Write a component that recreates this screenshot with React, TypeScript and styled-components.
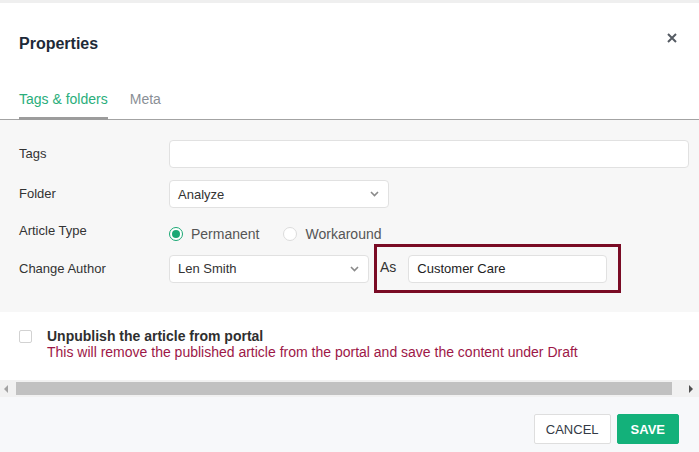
import styled, { createGlobalStyle } from 'styled-components';

const GlobalStyle = createGlobalStyle`
  * { box-sizing: border-box; }
  body {
    margin: 0;
    background: #ffffff;
    font-family: "Liberation Sans", Arial, sans-serif;
  }
`;

const Dialog = styled.div`
  width: 699px;
  height: 452px;
  background: #ffffff;
  border-top: 3px solid #efefef;
  display: flex;
  flex-direction: column;
  overflow: hidden;
`;

const Header = styled.div`
  display: flex;
  justify-content: space-between;
  align-items: center;
  padding: 32px 22px 0 19px;
  height: 50px;
`;

const Title = styled.h2`
  margin: 0;
  font-size: 16px;
  line-height: 18px;
  font-weight: 700;
  color: #1d2a38;
`;

const CloseBtn = styled.button`
  border: 0;
  background: none;
  padding: 0;
  margin-top: -12px;
  width: 10px;
  height: 10px;
  display: flex;
  cursor: pointer;
`;

const TabBar = styled.div`
  display: flex;
  gap: 22px;
  margin-top: 38px;
  padding: 0 19px;
  border-bottom: 1px solid #a3a3a3;
`;

const Tab = styled.div<{ $active?: boolean }>`
  font-size: 14px;
  line-height: 16px;
  padding-bottom: 10px;
  margin-bottom: -1px;
  color: ${(p) => (p.$active ? '#2aae7b' : '#8a8f96')};
  border-bottom: 3px solid ${(p) => (p.$active ? '#9c9c9c' : 'transparent')};
`;

const FormArea = styled.div`
  background: #f7f7f7;
  padding: 20px 10px 19px 19px;
  display: flex;
  flex-direction: column;
`;

const Row = styled.div<{ $gap?: number; $top?: boolean; $height?: number }>`
  display: flex;
  align-items: ${(p) => (p.$top ? 'flex-start' : 'center')};
  margin-top: ${(p) => p.$gap ?? 0}px;
  ${(p) => (p.$height ? `height: ${p.$height}px;` : '')}
`;

const Label = styled.div<{ $pad?: number }>`
  width: 150px;
  flex-shrink: 0;
  font-size: 13px;
  line-height: 16px;
  color: #333333;
  padding-top: ${(p) => p.$pad ?? 0}px;
`;

const TextInput = styled.div<{ $width?: number }>`
  height: 28px;
  ${(p) => (p.$width ? `width: ${p.$width}px;` : 'flex: 1;')}
  background: #ffffff;
  border: 1px solid #e1e1e1;
  border-radius: 4px;
  padding: 0 8px;
  display: flex;
  align-items: center;
  font-size: 13px;
  color: #222222;
`;

const Select = styled.div<{ $width: number }>`
  height: 28px;
  width: ${(p) => p.$width}px;
  background: #ffffff;
  border: 1px solid #e1e1e1;
  border-radius: 4px;
  padding: 0 9px 0 8px;
  display: flex;
  align-items: center;
  justify-content: space-between;
  font-size: 13px;
  color: #333333;
`;

const RadioGroup = styled.div`
  display: flex;
  align-items: center;
  padding-top: 6px;
`;

const RadioOption = styled.label`
  display: flex;
  align-items: center;
  gap: 8px;
  font-size: 14px;
  line-height: 16px;
  color: #555555;
  margin-right: 24px;
`;

const RadioDot = styled.span<{ $checked?: boolean }>`
  width: 14px;
  height: 14px;
  border-radius: 50%;
  background: #ffffff;
  border: 1px solid ${(p) => (p.$checked ? '#1aa874' : '#dcdcdc')};
  display: flex;
  align-items: center;
  justify-content: center;
  &::after {
    content: '';
    width: 8px;
    height: 8px;
    border-radius: 50%;
    background: ${(p) => (p.$checked ? '#1aa874' : 'transparent')};
  }
`;

const AsBox = styled.div`
  margin-left: 5px;
  height: 49px;
  width: 247px;
  border: 3px solid #7a0b25;
  display: flex;
  align-items: center;
  padding: 0 11px 0 3px;
  gap: 12px;
  font-size: 14px;
  color: #333333;
`;

const AsLabel = styled.span`
  margin-top: -3px;
`;

const OptionArea = styled.div`
  background: #ffffff;
  padding: 16px 19px 20px;
  display: flex;
  gap: 15px;
`;

const Checkbox = styled.span`
  width: 13px;
  height: 13px;
  margin-top: 2px;
  border: 1px solid #d2d2d2;
  border-radius: 2px;
  background: #ffffff;
  flex-shrink: 0;
`;

const OptionText = styled.div`
  display: flex;
  flex-direction: column;
  font-size: 14px;
  line-height: 16px;
`;

const OptionTitle = styled.span`
  font-weight: 700;
  color: #2f2f2f;
`;

const OptionNote = styled.span`
  color: #9d1747;
`;

const ScrollBar = styled.div`
  height: 17px;
  background: #f1f1f1;
  display: flex;
  align-items: center;
`;

const ScrollArrow = styled.div<{ $right?: boolean }>`
  width: 16px;
  height: 17px;
  display: flex;
  align-items: center;
  justify-content: center;
  flex-shrink: 0;
  ${(p) => (p.$right ? 'margin-left: 10px; width: 17px;' : '')}
  &::after {
    content: '';
    width: 0;
    height: 0;
    border-top: 4px solid transparent;
    border-bottom: 4px solid transparent;
    ${(p) =>
      p.$right
        ? 'border-left: 4px solid #505050;'
        : 'border-right: 4px solid #a3a3a3; margin-left: -4px;'}
  }
`;

const ScrollThumb = styled.div`
  flex: 1;
  height: 13px;
  background: #c1c1c1;
`;

const Footer = styled.div`
  flex: 1;
  background: #f7f8fa;
  display: flex;
  justify-content: flex-end;
  align-items: flex-start;
  gap: 6px;
  padding: 17px 20px 0;
`;

const Button = styled.button<{ $primary?: boolean }>`
  height: 30px;
  padding: 0 ${(p) => (p.$primary ? 13 : 11)}px;
  border-radius: 2px;
  font-family: "Liberation Sans", Arial, sans-serif;
  font-size: 13px;
  text-transform: uppercase;
  font-weight: ${(p) => (p.$primary ? 700 : 400)};
  color: ${(p) => (p.$primary ? '#ffffff' : '#333a45')};
  background: ${(p) => (p.$primary ? '#13b17a' : '#ffffff')};
  border: 1px solid ${(p) => (p.$primary ? '#13b17a' : '#dedede')};
  cursor: pointer;
`;

const Chevron = () => (
  <svg width="9" height="6" viewBox="0 0 9 6">
    <path d="M1 1 L4.5 4.5 L8 1" fill="none" stroke="#8a8a8a" strokeWidth="1.6" />
  </svg>
);

export default function App() {
  return (
    <>
      <GlobalStyle />
      <Dialog>
        <Header>
          <Title>Properties</Title>
          <CloseBtn aria-label="close">
            <svg width="10" height="10" viewBox="0 0 10 10">
              <path d="M1 1 L9 9 M9 1 L1 9" stroke="#555b63" strokeWidth="2" />
            </svg>
          </CloseBtn>
        </Header>
        <TabBar>
          <Tab $active>Tags &amp; folders</Tab>
          <Tab>Meta</Tab>
        </TabBar>
        <FormArea>
          <Row>
            <Label>Tags</Label>
            <TextInput />
          </Row>
          <Row $gap={12}>
            <Label>Folder</Label>
            <Select $width={220}>
              Analyze
              <Chevron />
            </Select>
          </Row>
          <Row $gap={12} $top $height={23}>
            <Label $pad={3}>Article Type</Label>
            <RadioGroup>
              <RadioOption>
                <RadioDot $checked />
                Permanent
              </RadioOption>
              <RadioOption>
                <RadioDot />
                Workaround
              </RadioOption>
            </RadioGroup>
          </Row>
          <Row $gap={1}>
            <Label>Change Author</Label>
            <Select $width={200}>
              Len Smith
              <Chevron />
            </Select>
            <AsBox>
              <AsLabel>As</AsLabel>
              <TextInput $width={199}>Customer Care</TextInput>
            </AsBox>
          </Row>
        </FormArea>
        <OptionArea>
          <Checkbox />
          <OptionText>
            <OptionTitle>Unpublish the article from portal</OptionTitle>
            <OptionNote>
              This will remove the published article from the portal and save the content under Draft
            </OptionNote>
          </OptionText>
        </OptionArea>
        <ScrollBar>
          <ScrollArrow />
          <ScrollThumb />
          <ScrollArrow $right />
        </ScrollBar>
        <Footer>
          <Button>Cancel</Button>
          <Button $primary>Save</Button>
        </Footer>
      </Dialog>
    </>
  );
}
